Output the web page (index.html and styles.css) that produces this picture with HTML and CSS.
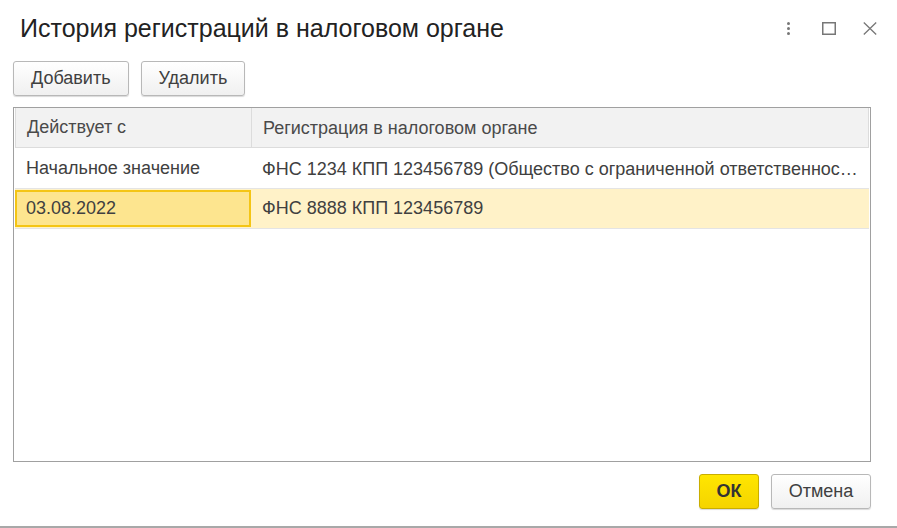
FILE: index.html
```html
<!DOCTYPE html>
<html lang="ru">
<head>
<meta charset="utf-8">
<link rel="stylesheet" href="styles.css">
</head>
<body>
<div class="dialog">
  <div class="titlebar">
    <div class="title">История регистраций в налоговом органе</div>
    <div class="controls">
      <svg class="ic" width="13" height="13" viewBox="0 0 13 13"><circle cx="6.5" cy="1.5" r="1.5" fill="#777"/><circle cx="6.5" cy="6.5" r="1.5" fill="#777"/><circle cx="6.5" cy="11.5" r="1.5" fill="#777"/></svg>
      <svg class="ic" width="14" height="13" viewBox="0 0 14 13"><rect x="0.75" y="0.75" width="12.5" height="11.5" fill="none" stroke="#777" stroke-width="1.5"/></svg>
      <svg class="ic" width="14" height="13" viewBox="0 0 14 13"><path d="M0.8 0.5 L13.2 12.5 M13.2 0.5 L0.8 12.5" stroke="#777" stroke-width="1.3"/></svg>
    </div>
  </div>
  <div class="toolbar">
    <button class="btn">Добавить</button>
    <button class="btn">Удалить</button>
  </div>
  <div class="table">
    <div class="row head">
      <div class="cell c1">Действует с</div>
      <div class="cell c2">Регистрация в налоговом органе</div>
    </div>
    <div class="row">
      <div class="cell c1">Начальное значение</div>
      <div class="cell c2">ФНС 1234 КПП 123456789 (Общество с ограниченной ответственностью)</div>
    </div>
    <div class="row sel">
      <div class="cell c1 cur">03.08.2022</div>
      <div class="cell c2">ФНС 8888 КПП 123456789</div>
    </div>
  </div>
  <div class="footer">
    <button class="btn ok">ОК</button>
    <button class="btn cancel">Отмена</button>
  </div>
</div>
</body>
</html>
```
FILE: styles.css
```css
html, body {
  margin: 0;
  padding: 0;
  background: #fff;
}
body {
  font-family: "Liberation Sans", Arial, sans-serif;
  color: #404040;
  width: 897px;
  height: 528px;
  overflow: hidden;
}
.dialog {
  height: 526px;
  border-bottom: 2px solid #a8a8a8;
  display: flex;
  flex-direction: column;
}
.titlebar {
  display: flex;
  align-items: center;
  justify-content: space-between;
  height: 56px;
  padding: 0 20px 0 20px;
}
.title {
  font-size: 25px;
  color: #222;
  margin-top: 0;
}
.controls {
  display: flex;
  gap: 27px;
  align-items: center;
  margin-top: 1px;
}
.ic { display: block; }
.toolbar {
  display: flex;
  gap: 12px;
  padding: 5px 13px 0;
  height: 46px;
}
.btn {
  font-family: "Liberation Sans", Arial, sans-serif;
  font-size: 18px;
  color: #404040;
  height: 35px;
  padding: 0 17px;
  background: linear-gradient(#ffffff, #f0f0f0);
  border: 1px solid #b8b8b8;
  border-radius: 3px;
  box-shadow: 0 1px 1px rgba(0,0,0,0.15);
}
.table {
  margin: 0 26px 0 13px;
  height: 353px;
  border: 1px solid #a0a0a0;
  padding: 0 1px;
}
.row {
  display: flex;
  height: 40px;
  border-bottom: 1px solid #e4e4e4;
  box-sizing: border-box;
}
.row.head {
  background: #f2f2f2;
  border: 1px solid #dcdcdc;
  border-top: none;
  margin: 0 0 1px 0;
  height: 40px;
}
.cell {
  display: flex;
  align-items: center;
  padding: 0 11px;
  font-size: 18px;
  white-space: nowrap;
  overflow: hidden;
  box-sizing: border-box;
}
.cell.c2 {
  flex: 1;
  min-width: 0;
  display: block;
  line-height: 40px;
  text-overflow: ellipsis;
  padding-right: 10px;
}
.c1 { width: 236px; flex: none; }
.head .c1 { border-right: 1px solid #dcdcdc; }
.head .cell { color: #4a4a4a; }
.row.sel { background: #fff2c8; }
.row.sel .cell.c2 { line-height: 38px; }
.cur {
  background: #fde58f;
  border: 2px solid #f4c515;
  padding-left: 9px;
  margin: 1px 0 1px 0;
}
.footer {
  display: flex;
  justify-content: flex-end;
  gap: 12px;
  padding: 12px 26px 0 0;
}
.btn.ok {
  width: 60px;
  padding: 0;
  font-weight: bold;
  background: linear-gradient(#ffe600, #f5d400);
  border-color: #c9ae00;
  color: #333;
}
.btn.cancel { width: 100px; padding: 0; }
```
